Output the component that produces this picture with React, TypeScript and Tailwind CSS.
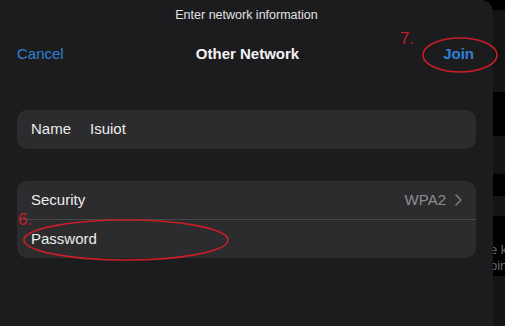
import React from 'react';

const font = { fontFamily: '"Liberation Sans", Arial, sans-serif' };

const App = () => {
  return (
    <div className="flex w-[505px] h-[326px] bg-black overflow-hidden" style={font}>
      {/* sheet */}
      <div className="relative w-[493px] h-full bg-[#1c1c1e] rounded-tr-[12px] shrink-0">
        <div className="pt-[8px] text-center text-[12.5px] leading-[15px] text-[#e2e2e4]">
          Enter network information
        </div>

        <div className="grid grid-cols-[1fr_auto_1fr] items-center px-[17px] h-[31px] mt-[16px]">
          <span className="text-[15px] text-[#2f80d8]">Cancel</span>
          <span className="text-[15px] font-bold text-[#f2f2f2] pl-[2px]">Other Network</span>
          <span className="text-[15px] font-bold text-[#2f80d8] text-right pr-[2px]">Join</span>
        </div>

        <div className="mx-[17px] mt-[40px] h-[39px] flex items-center gap-[19px] px-[14px] rounded-[10px] bg-[#2c2c2e] text-[15px] text-[#ececec]">
          <span>Name</span>
          <span>Isuiot</span>
        </div>

        <div className="mx-[17px] mt-[32px] rounded-[10px] bg-[#2c2c2e] text-[15px] text-[#ececec]">
          <div className="flex items-center justify-between h-[38px] px-[14px]">
            <span>Security</span>
            <span className="flex items-center gap-[9px] text-[#8e8e93]">
              WPA2
              <svg width="7" height="12" viewBox="0 0 7 12" fill="none">
                <path d="M1 1l5 5-5 5" stroke="#7c7c80" strokeWidth="1.5" strokeLinecap="round" strokeLinejoin="round" />
              </svg>
            </span>
          </div>
          <div className="h-px bg-[#48484a]" />
          <div className="flex items-center h-[38px] px-[14px]">
            <span>Password</span>
          </div>
        </div>

        {/* red annotations */}
        <span className="absolute left-[400px] top-[29px] text-[17px] leading-[20px] text-[#c41e26]">7.</span>
        <span className="absolute left-[18px] top-[210px] text-[17px] leading-[20px] text-[#c41e26]">6.</span>
        <svg className="absolute left-0 top-0 pointer-events-none" width="505" height="326" viewBox="0 0 505 326" fill="none">
          <ellipse cx="460" cy="55" rx="37" ry="17" stroke="#c81e28" strokeWidth="1.6" />
          <ellipse cx="126" cy="240" rx="102" ry="20" stroke="#c81e28" strokeWidth="1.6" />
        </svg>
      </div>

      {/* background strip behind the sheet */}
      <div className="flex-1 flex flex-col overflow-hidden">
        <div className="h-[10px] bg-black" />
        <div className="h-[82px] bg-[#141414]" />
        <div className="h-[44px] bg-black" />
        <div className="h-[38px] bg-[#141414]" />
        <div className="h-[22px] bg-black" />
        <div className="h-[20px] bg-[#141414]" />
        <div className="h-[20px] bg-black" />
        <div className="h-[40px] bg-black relative">
          <span className="absolute left-[-3px] top-[6px] text-[13px] leading-[16px] text-[#6a6a6a] whitespace-nowrap">e k</span>
          <span className="absolute left-[-3px] top-[22px] text-[13px] leading-[16px] text-[#6a6a6a] whitespace-nowrap">oin</span>
        </div>
        <div className="flex-1 bg-[#141414]" />
      </div>
    </div>
  );
};

export default App;
